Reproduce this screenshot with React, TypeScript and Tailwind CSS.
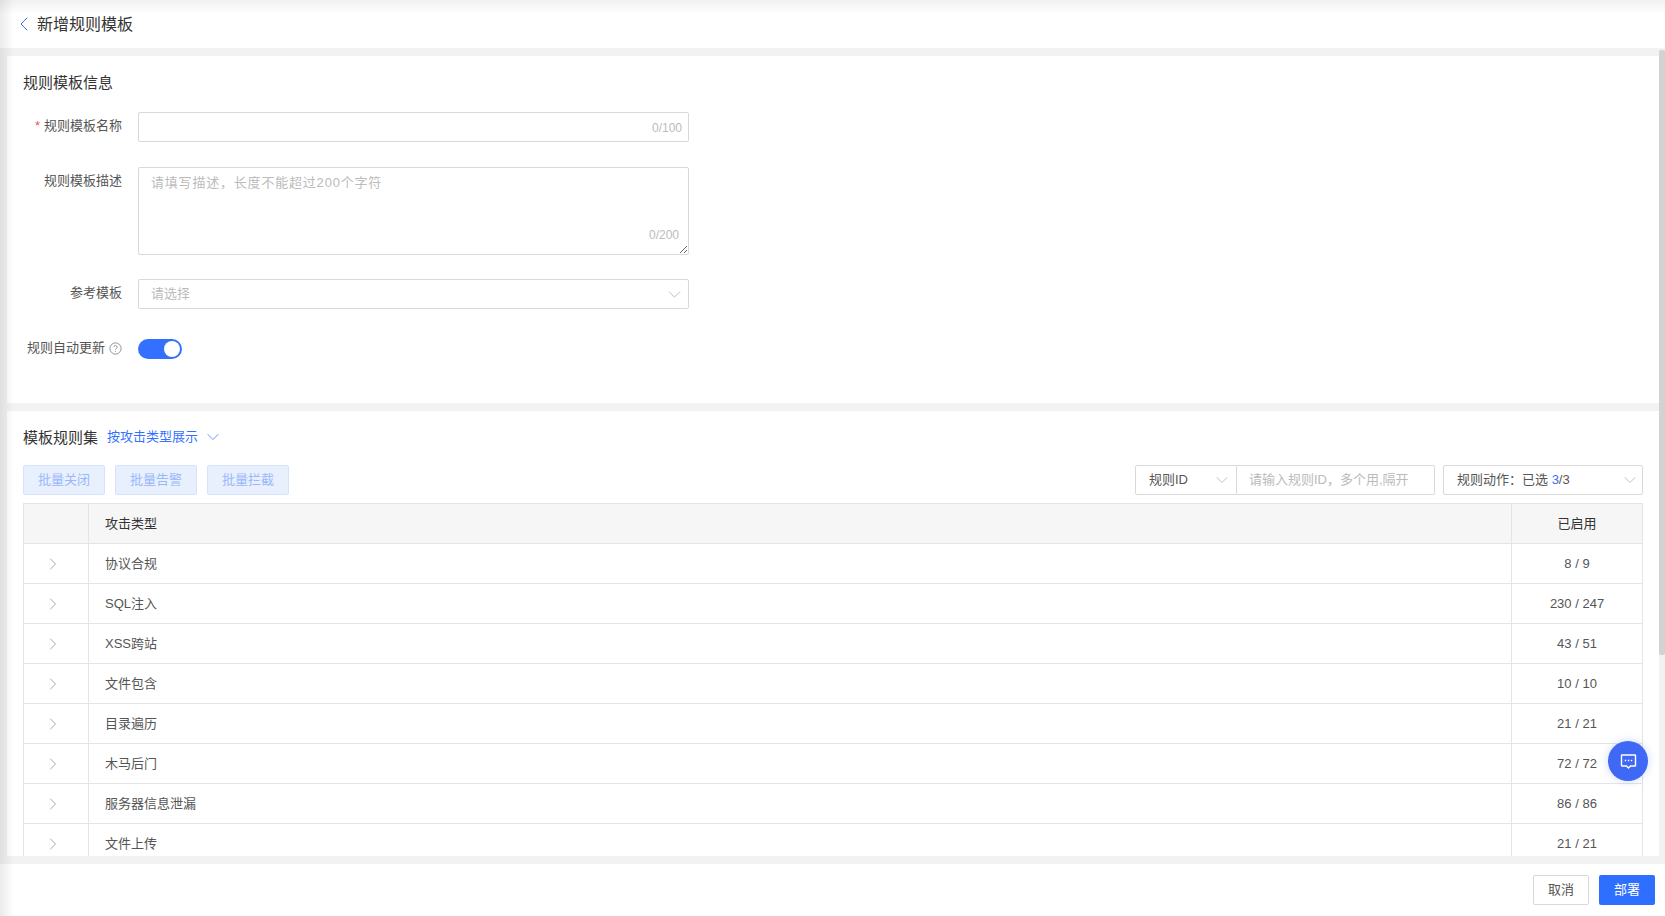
import React from "react";
import { ChevronDown, ChevronLeft, ChevronRight } from "lucide-react";

const FONT = '"Liberation Sans","Noto Sans CJK SC",sans-serif';

const rows: [string, string][] = [
  ["协议合规", "8 / 9"],
  ["SQL注入", "230 / 247"],
  ["XSS跨站", "43 / 51"],
  ["文件包含", "10 / 10"],
  ["目录遍历", "21 / 21"],
  ["木马后门", "72 / 72"],
  ["服务器信息泄漏", "86 / 86"],
  ["文件上传", "21 / 21"],
];

function Label({ children, required }: { children: React.ReactNode; required?: boolean }) {
  return (
    <div className="w-[99px] shrink-0 pt-[5px] text-right text-[13px] leading-[18px] text-[#555]">
      {required && <span className="mr-1 text-[#e5604f]">*</span>}
      {children}
    </div>
  );
}

function BatchButton({ children }: { children: React.ReactNode }) {
  return (
    <button className="h-[30px] w-[82px] rounded-[2px] border border-[#d5e3fd] bg-[#e8f0fe] text-[13px] text-[#98b8fb]">
      {children}
    </button>
  );
}

export default function App() {
  return (
    <div
      className="relative flex h-[916px] w-[1665px] flex-col overflow-hidden bg-[#f2f2f2]"
      style={{ fontFamily: FONT }}
    >
      <header className="flex h-12 shrink-0 items-center bg-white pl-3">
        <ChevronLeft size={24} strokeWidth={1} className="text-[#3370ff]" />
        <span className="ml-[1px] pt-[1px] text-base text-[#333]">新增规则模板</span>
      </header>

      <main className="ml-[7px] mr-[6px] mt-2 flex min-h-0 flex-1 flex-col gap-2 overflow-hidden">
        <section className="h-[347px] shrink-0 bg-white pl-4 pt-[18px]">
          <h2 className="text-[15px] font-normal leading-[18px] text-[#333]">规则模板信息</h2>

          <div className="mt-[20px] flex">
            <Label required>规则模板名称</Label>
            <div className="relative ml-4 h-[30px] w-[551px]">
              <input className="h-full w-full rounded-[2px] border border-[#d9d9d9] px-3 text-[13px] outline-none" />
              <span className="absolute right-[7px] top-[8px] text-xs text-[#bbb]">0/100</span>
            </div>
          </div>

          <div className="mt-[25px] flex">
            <Label>规则模板描述</Label>
            <div className="relative ml-4 h-[88px] w-[551px]">
              <textarea
                placeholder="请填写描述，长度不能超过200个字符"
                className="block h-full w-full resize rounded-[2px] border border-[#d9d9d9] px-3 py-[6px] text-[13px] leading-[18px] tracking-[0.8px] outline-none placeholder:text-[#bbb]"
              />
              <span className="absolute bottom-[12px] right-[10px] text-xs text-[#bbb]">0/200</span>
            </div>
          </div>

          <div className="mt-[24px] flex">
            <Label>参考模板</Label>
            <div className="ml-4 flex h-[30px] w-[551px] items-center justify-between rounded-[2px] border border-[#d9d9d9] pl-3 pr-[3px] text-[13px] text-[#bbb]">
              请选择
              <ChevronDown size={21} strokeWidth={1} className="text-[#b5b5b5]" />
            </div>
          </div>

          <div className="mt-[30px] flex items-start">
            <div className="flex w-[99px] shrink-0 items-center justify-end gap-1 text-[13px] leading-[18px] text-[#555]">
              规则自动更新
              <svg width="13" height="13" viewBox="0 0 13 13" fill="none" stroke="#888" strokeWidth="0.9">
                <circle cx="6.5" cy="6.5" r="5.6" />
                <path d="M4.9 5.1a1.6 1.6 0 1 1 2.4 1.4c-.5.3-.8.6-.8 1.2" />
                <path d="M6.5 9v.8" />
              </svg>
            </div>
            <div className="ml-4 flex h-5 w-11 items-center justify-end rounded-full bg-[#3370ff] pr-[2px]">
              <span className="h-4 w-4 rounded-full bg-white" />
            </div>
          </div>
        </section>

        <section className="min-h-0 flex-1 overflow-hidden bg-white px-4">
          <div className="flex h-[54px] items-center pt-[1px]">
            <h2 className="text-[15px] font-normal text-[#333]">模板规则集</h2>
            <span className="mb-[3px] ml-[9px] flex items-center text-[13px] text-[#3370ff]">
              按攻击类型展示
              <ChevronDown size={20} strokeWidth={1.1} className="ml-[5px] text-[#5a8bff]" />
            </span>
          </div>

          <div className="flex h-[38px] items-start justify-between">
            <div className="flex gap-[10px]">
              <BatchButton>批量关闭</BatchButton>
              <BatchButton>批量告警</BatchButton>
              <BatchButton>批量拦截</BatchButton>
            </div>
            <div className="flex gap-2">
              <div className="flex h-[30px] text-[13px]">
                <div className="flex w-[102px] items-center justify-between rounded-l-[2px] border border-[#d9d9d9] pl-[13px] pr-1 text-[#555]">
                  规则ID
                  <ChevronDown size={20} strokeWidth={1} className="text-[#b5b5b5]" />
                </div>
                <div className="flex w-[198px] items-center rounded-r-[2px] border border-l-0 border-[#d9d9d9] pl-3 text-[#bbb]">
                  请输入规则ID，多个用,隔开
                </div>
              </div>
              <div className="flex h-[30px] w-[200px] items-center justify-between rounded-[2px] border border-[#d9d9d9] pl-[13px] pr-[2px] text-[13px] text-[#555]">
                <span>
                  规则动作：已选 <span className="text-[#3370ff]">3</span>/3
                </span>
                <ChevronDown size={20} strokeWidth={1} className="text-[#b5b5b5]" />
              </div>
            </div>
          </div>

          <div className="border-x border-t border-[#e4e4e4]">
            <div className="flex h-10 border-b border-[#e4e4e4] bg-[#f6f6f6] text-[13px] text-[#333]">
              <div className="w-[65px] shrink-0 border-r border-[#e4e4e4]" />
              <div className="flex flex-1 items-center pl-4">攻击类型</div>
              <div className="flex w-[131px] shrink-0 items-center justify-center border-l border-[#e4e4e4]">已启用</div>
            </div>
            {rows.map(([name, count]) => (
              <div key={name} className="flex h-10 border-b border-[#e4e4e4] text-[13px] text-[#555]">
                <div className="flex w-[65px] shrink-0 items-center justify-center border-r border-[#e4e4e4] pr-[6px]">
                  <ChevronRight size={20} strokeWidth={1} className="text-[#999]" />
                </div>
                <div className="flex flex-1 items-center pl-4">{name}</div>
                <div className="flex w-[131px] shrink-0 items-center justify-center border-l border-[#e4e4e4]">{count}</div>
              </div>
            ))}
          </div>
        </section>
      </main>

      <footer className="mt-2 flex h-[52px] shrink-0 items-center justify-end gap-[10px] bg-white pr-[10px]">
        <button className="h-[30px] w-[56px] rounded-[2px] border border-[#d9d9d9] bg-white text-[13px] text-[#555]">取消</button>
        <button className="h-[30px] w-[56px] rounded-[2px] bg-[#2f6fff] text-[13px] text-white">部署</button>
      </footer>

      <div className="pointer-events-none absolute inset-y-0 left-0 w-[14px] bg-gradient-to-r from-[#00000014] to-transparent" />
      <div className="pointer-events-none absolute inset-x-0 top-0 h-[14px] bg-gradient-to-b from-[#0000000f] to-transparent" />
      <div className="absolute right-0 top-[50px] h-[605px] w-[6px] rounded-[2px] bg-[#d2d2d2]" />
      <button className="absolute left-[1608px] top-[741px] flex h-10 w-10 items-center justify-center rounded-full bg-[#3f68f5] shadow-[0_0_8px_rgba(63,104,245,0.25)]">
        <svg width="17" height="17" viewBox="0 0 17 17" fill="none" stroke="white" strokeWidth="1.4">
          <path d="M2 2h13a.5.5 0 0 1 .5.5v10a.5.5 0 0 1-.5.5h-4.5l-2 2-2-2H2a.5.5 0 0 1-.5-.5v-10A.5.5 0 0 1 2 2z" />
          <path d="M4.8 7.5h1.4M7.8 7.5h1.4M10.8 7.5h1.4" strokeWidth="1.5" />
        </svg>
      </button>
    </div>
  );
}
